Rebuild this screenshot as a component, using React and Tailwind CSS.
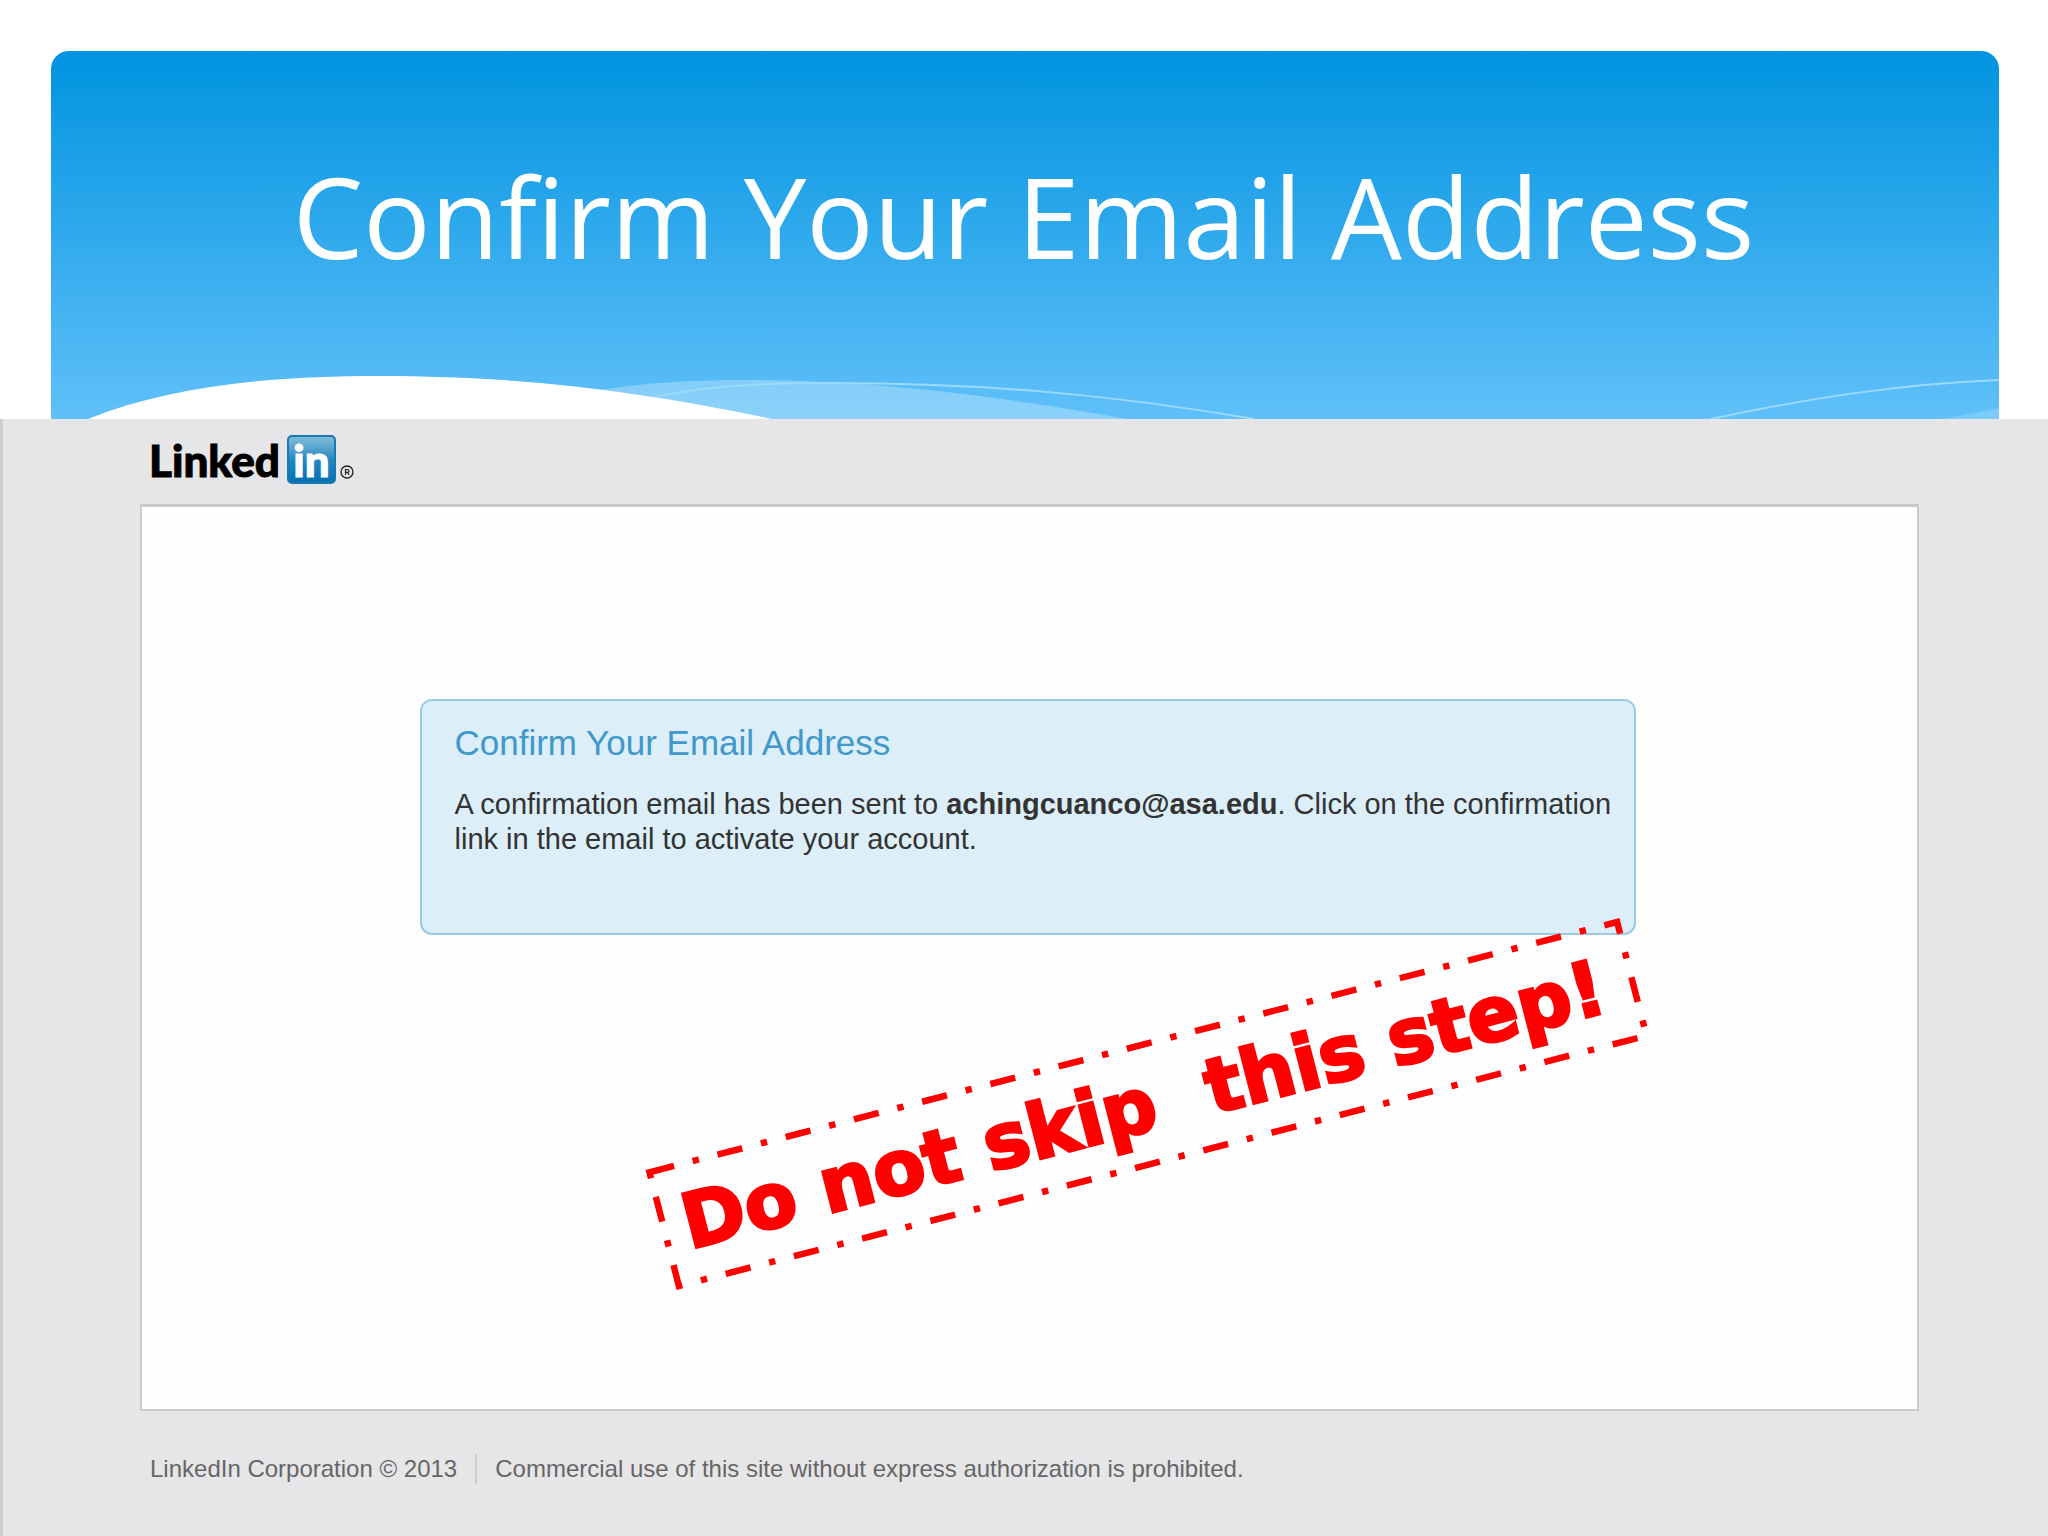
function Waves() {
  return (
    <svg className="block h-13 w-full" viewBox="51 367 1948 52" preserveAspectRatio="none" aria-hidden="true">
      <path fill="#fff" fillOpacity="0.28" d="M560 419 L600 390 C650 382 700 380 747 380 C870 380 1000 396 1126 419 Z" />
      <path fill="none" stroke="#9bdafb" strokeWidth="2" d="M640 400 C700 386 760 383 830 383 C990 383 1120 396 1254 419" />
      <path fill="none" stroke="#9bdafb" strokeWidth="2" d="M1711 419 C1810 398 1900 384 1999 380" />
      <path fill="#fff" fillOpacity="0.18" d="M1942 419 L1999 408 V419 Z" />
      <path fill="#fff" d="M88 419 C176 384 280 376 379 376 C520 376 640 391 772 419 Z" />
    </svg>
  );
}

function Banner() {
  return (
    <header className="mr-[49px] ml-[51px] flex h-[368px] flex-col overflow-hidden rounded-t-[18px] bg-linear-to-b/srgb from-[#0093e0] to-[#60c0f9]">
      <h1 className="flex flex-1 items-center justify-center pt-[14px] pr-[3px] font-['Open_Sans','Noto_Sans',sans-serif] text-[112px] leading-none whitespace-nowrap text-white">
        Confirm Your Email Address
      </h1>
      <Waves />
    </header>
  );
}

function Logo() {
  return (
    <a href="#home" aria-label="LinkedIn" className="flex w-fit items-center font-['Lato',sans-serif] text-[44px] leading-none font-black text-black">
      <span className="[-webkit-text-stroke:1px_#000]">Linked</span>
      <span className="ml-[7px] flex size-[49px] items-center justify-center rounded-[5px] border-2 border-[#1a78b0] bg-linear-to-b from-[#7fbcda] via-[#2389c2] to-[#0471b2] text-white [-webkit-text-stroke:1px_#fff]">
        in
      </span>
      <svg className="mt-6 ml-1 size-[14px]" viewBox="0 0 14 14" fill="none" stroke="#222" aria-hidden="true">
        <circle cx="7" cy="7" r="6" strokeWidth="1.3" />
        <path d="M5.5 10 V4.5 H7.5 Q9 4.5 9 6 T7.5 7.3 H5.5 M7.5 7.3 L9 10" strokeWidth="1.2" />
      </svg>
    </a>
  );
}

function Alert() {
  return (
    <section className="mx-auto h-[236px] w-[1216px] rounded-xl border-2 border-[#9dcae3] bg-[#dceef7] pt-[22px] pr-4 pl-[33px]">
      <h2 className="text-[35px] leading-10 text-[#4098cb]">Confirm Your Email Address</h2>
      <p className="mt-6 text-[29px] leading-[35px] text-[#333]">
        A confirmation email has been sent to <b>achingcuanco@asa.edu</b>. Click on the confirmation link in the email to
        activate your account.
      </p>
    </section>
  );
}

function Stamp() {
  return (
    <div className="absolute top-[535px] left-[503px] flex h-[124px] w-[1006px] rotate-[-14.5deg] items-center pl-[23px]">
      <svg className="absolute inset-0 size-full" viewBox="0 0 1006 124" fill="none" aria-hidden="true">
        <rect x="3" y="3" width="1000" height="118" stroke="#f00" strokeWidth="7" pathLength="349" strokeDasharray="4 3 1 3" />
      </svg>
      <strong className="relative font-['DejaVu_Sans',sans-serif] text-[76px] leading-none font-bold whitespace-pre text-[#f00] [-webkit-text-stroke:3px_#f00]">
        {'Do not skip  this step!'}
      </strong>
    </div>
  );
}

export default function App() {
  return (
    <div className="flex min-h-screen flex-col bg-white pt-[51px] font-['Liberation_Sans',Arial,sans-serif]">
      <Banner />
      <div className="flex-1 border-l-3 border-[#cfcfd1] bg-[#e6e5e7] pr-[129px] pl-[137px]">
        <div className="flex h-[85px] items-center pb-1 pl-[9px]">
          <Logo />
        </div>
        <main className="relative h-[907px] border-2 border-t-3 border-[#cacaca] bg-[#fefefe] pt-[192px] pr-1">
          <Alert />
          <Stamp />
        </main>
        <footer className="mt-[43px] flex items-center pl-[10px] text-2xl leading-[30px] text-[#666]">
          <span>LinkedIn Corporation © 2013</span>
          <span className="ml-[18px] border-l-2 border-[#cdcdcf] pl-[18px]">
            Commercial use of this site without express authorization is prohibited.
          </span>
        </footer>
      </div>
    </div>
  );
}
